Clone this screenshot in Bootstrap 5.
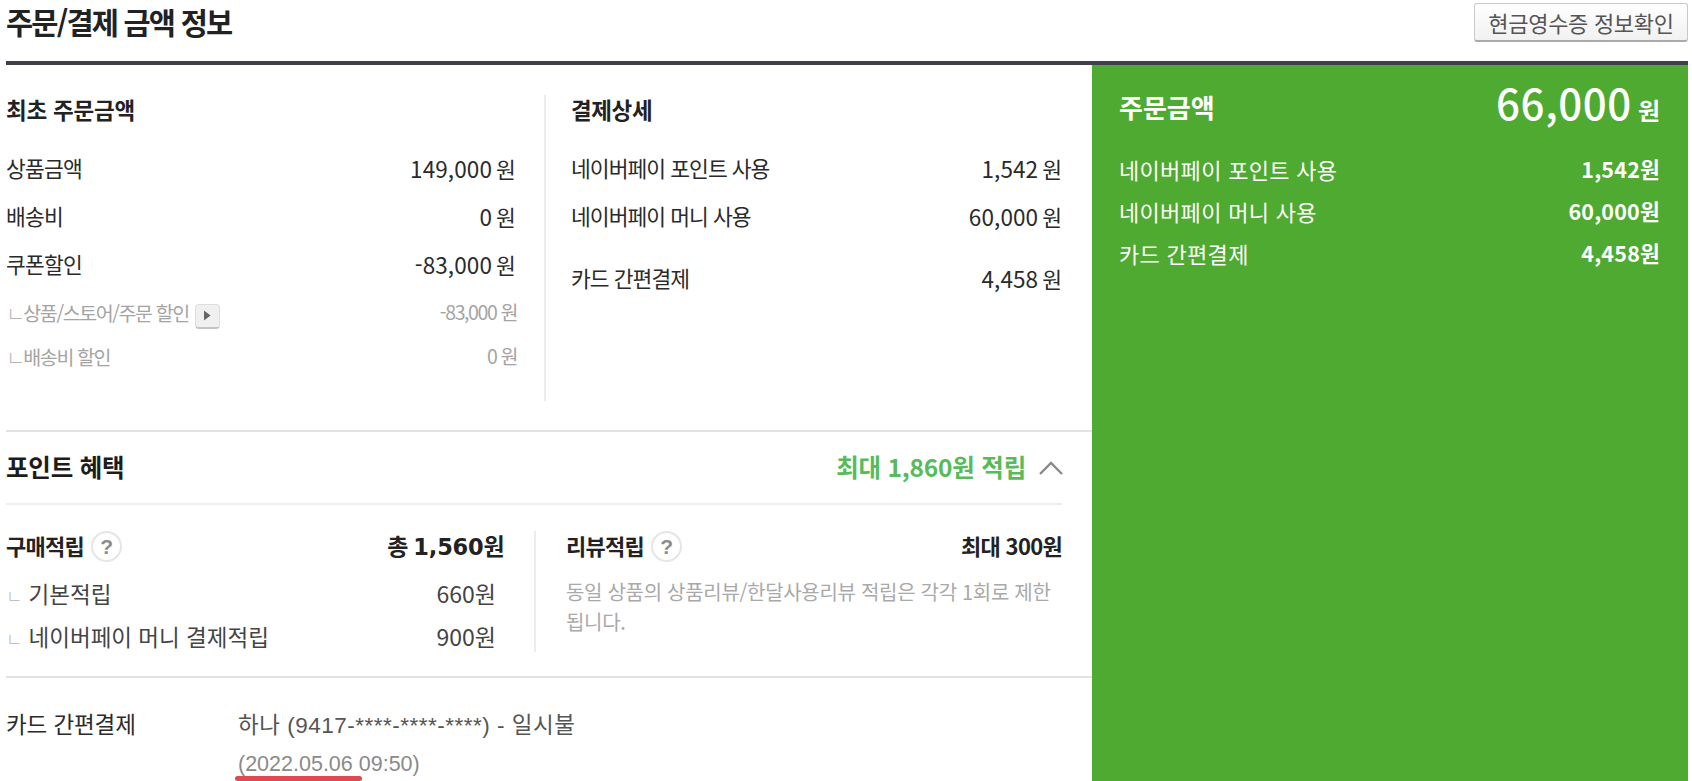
<!DOCTYPE html>
<html lang="ko">
<head>
<meta charset="utf-8">
<title>주문/결제 금액 정보</title>
<link href="https://cdn.jsdelivr.net/npm/bootstrap@5.3.0/dist/css/bootstrap.min.css" rel="stylesheet">
<style>
html,body{height:781px;overflow:hidden;background:#fff}
body{font-family:"Noto Sans CJK KR","Noto Sans",sans-serif;color:#26282b}
.sheet{margin:0 4px 0 6px}
.head-bar{height:65px;border-bottom:4px solid #3e414b;padding-bottom:18px}
.head-title{font-size:29.5px;font-weight:700;letter-spacing:-1.8px;line-height:42px;margin:0;color:#222}
.receipt-btn{position:relative;top:3px;width:214px;height:39px;padding:0;font-size:22px;line-height:36px;color:#555;background:linear-gradient(#fff,#f1f1f1);border:1px solid #c9c9c9;border-bottom:2px solid #aaa;border-radius:3px;white-space:nowrap;letter-spacing:-.3px}
.left-area{width:1086px}
.green-area{width:596px;height:716px;background:#4eaa30;color:#fff;padding:19px 28px 0 27px}
.top-sec{height:367px;border-bottom:2px solid #e2e2de}
.first-col{width:509px;padding-top:21px}
.rule-v{width:2px;background:#ececec}
.detail-col{width:515px;padding:21px 0 0 25px}
.sub-head{font-size:22.500px;font-weight:700;line-height:46px;height:46px;letter-spacing:-.2px;color:#222;margin:0}
.detail-col .sub-head{letter-spacing:-.4px}
.rule-v.tall{height:306px;margin:30px 0 0 29px}
.money-row{font-size:21.5px;line-height:48px;height:48px;letter-spacing:-.8px;color:#2a2a2a}
.detail-col .money-row{letter-spacing:-.95px}
.money-row .num{font-size:22.5px;letter-spacing:.1px}
.money-row .won{margin-left:4px}
.gap-row{margin-top:14px}
.first-rows{margin-top:12px}
.dim-row{font-size:19.5px;line-height:44px;height:44px;letter-spacing:-1.4px;color:#a4a4a4;margin-right:-2px}
.dim-start{margin-top:2px}
.corner{font-size:21px;font-weight:300;color:#b5b5b5;margin-right:-2px;letter-spacing:0}
.tri-btn{display:inline-flex;width:25px;height:25px;align-items:center;justify-content:center;background:#f0f0f0;border:1px solid #ddd;border-bottom:2px solid #c4c4c4;border-radius:4px;vertical-align:0;margin-left:6px}
.tri-btn svg{display:block}
.point-top{height:73px;width:1056px;border-bottom:2px solid #eeeeee}
.point-title{font-size:24.5px;font-weight:700;color:#1c1c1c;letter-spacing:-.2px}
.point-sum{font-size:24.5px;font-weight:700;color:#57bb5a;letter-spacing:-.2px}
.chev{margin-left:12px;margin-right:-2px}
.point-body{height:173px;width:1056px}
.save-col{width:528px;padding-right:30px}
.rule-v.short{height:121px;margin-top:26px}
.review-col{flex:1;padding-left:30px}
.save-head{height:58px;padding-top:17px;line-height:46px;font-size:22px;font-weight:700;color:#222;letter-spacing:-.7px}
.save-head .tot{font-size:23px}
.save-head .tot b{font-family:"DejaVu Sans",sans-serif;font-size:22.5px;letter-spacing:-.2px}
.q-mark{display:inline-flex;width:31px;height:31px;border-radius:50%;align-items:center;justify-content:center;background:#fff;border:2px solid #e6e6e6;font-family:"Liberation Sans",sans-serif;font-size:21px;font-weight:700;color:#8b8b8b;margin-left:7px;vertical-align:1px;line-height:1;letter-spacing:0}
.save-row{font-size:22.5px;line-height:46px;height:43px;color:#444;padding-right:8px}
.save-first{margin-top:7px}
.save-row .corner{margin-right:6px;font-size:18px}
.save-row .num{font-size:23px}
.review-note{font-size:20px;line-height:30px;color:#a9a9a9;letter-spacing:-.3px;margin:14px 0 0}
.foot-sec{border-top:2px solid #e2e2de;margin-top:-2px;padding-top:22px}
.foot-label{width:232px;font-size:22.5px;line-height:46px;color:#2a2a2a;letter-spacing:-.1px}
.foot-card{font-size:22.5px;line-height:46px;color:#555;letter-spacing:.5px}
.foot-date{font-size:21.5px;line-height:30px;color:#8a8a8a;position:relative;display:inline-block;font-family:"Liberation Sans",sans-serif}
.foot-card .lat{font-family:"Liberation Sans",sans-serif}
.red-mark{position:absolute;left:-3px;top:27px;width:127px;height:5px;background:#dd4a52;border-radius:3px}
.green-head{height:46px;line-height:46px;margin-bottom:18px}
.green-head .g-label{font-size:26px;font-weight:700}
.green-head .g-big{font-size:42px;font-weight:500;line-height:46px;letter-spacing:.6px}
.green-head .g-won{font-size:24px;font-weight:700;margin-left:6px}
.green-row{font-size:22px;line-height:42px;height:42px;letter-spacing:.3px}
.green-row strong{font-weight:700;font-size:21.5px;letter-spacing:.2px}
</style>
</head>
<body>
<div class="sheet">
  <header class="head-bar d-flex justify-content-between align-items-start">
    <h1 class="head-title">주문/결제 금액 정보</h1>
    <button type="button" class="btn receipt-btn">현금영수증 정보확인</button>
  </header>
  <div class="d-flex">
    <main class="left-area">
      <section class="top-sec d-flex">
        <div class="first-col">
          <h2 class="sub-head">최초 주문금액</h2>
          <div class="first-rows">
            <div class="money-row d-flex justify-content-between"><span>상품금액</span><span><span class="num">149,000</span><span class="won">원</span></span></div>
            <div class="money-row d-flex justify-content-between"><span>배송비</span><span><span class="num">0</span><span class="won">원</span></span></div>
            <div class="money-row d-flex justify-content-between"><span>쿠폰할인</span><span><span class="num">-83,000</span><span class="won">원</span></span></div>
            <div class="dim-row dim-start d-flex justify-content-between"><span><span class="corner">ㄴ</span>상품/스토어/주문 할인<span class="tri-btn"><svg width="8" height="11" viewBox="0 0 8 11"><path d="M1 0.5 7.5 5.5 1 10.500Z" fill="#666"/></svg></span></span><span>-83,000<span class="won"> 원</span></span></div>
            <div class="dim-row d-flex justify-content-between"><span><span class="corner">ㄴ</span>배송비 할인</span><span>0<span class="won"> 원</span></span></div>
          </div>
        </div>
        <div class="rule-v tall"></div>
        <div class="detail-col">
          <h2 class="sub-head">결제상세</h2>
          <div class="first-rows">
            <div class="money-row d-flex justify-content-between"><span>네이버페이 포인트 사용</span><span><span class="num">1,542</span><span class="won">원</span></span></div>
            <div class="money-row d-flex justify-content-between"><span>네이버페이 머니 사용</span><span><span class="num">60,000</span><span class="won">원</span></span></div>
            <div class="money-row gap-row d-flex justify-content-between"><span>카드 간편결제</span><span><span class="num">4,458</span><span class="won">원</span></span></div>
          </div>
        </div>
      </section>
      <section class="point-top d-flex justify-content-between align-items-center">
        <span class="point-title">포인트 혜택</span>
        <span class="d-flex align-items-center"><span class="point-sum">최대 1,860원 적립</span>
          <svg class="chev" width="26" height="16" viewBox="0 0 26 16"><path d="M2 14 13 3 24 14" fill="none" stroke="#8a8a8a" stroke-width="2.400"/></svg>
        </span>
      </section>
      <section class="point-body d-flex">
        <div class="save-col">
          <div class="save-head d-flex justify-content-between"><span>구매적립<span class="q-mark">?</span></span><span class="tot">총 <b>1,560</b>원</span></div>
          <div class="save-row save-first d-flex justify-content-between"><span><span class="corner">ㄴ</span>기본적립</span><span class="num">660원</span></div>
          <div class="save-row d-flex justify-content-between"><span><span class="corner">ㄴ</span>네이버페이 머니 결제적립</span><span class="num">900원</span></div>
        </div>
        <div class="rule-v short"></div>
        <div class="review-col">
          <div class="save-head d-flex justify-content-between"><span>리뷰적립<span class="q-mark">?</span></span><span>최대 300원</span></div>
          <p class="review-note">동일 상품의 상품리뷰/한달사용리뷰 적립은 각각 1회로 제한<br>됩니다.</p>
        </div>
      </section>
      <section class="foot-sec d-flex">
        <div class="foot-label">카드 간편결제</div>
        <div>
          <div class="foot-card">하나 <span class="lat">(9417-****-****-****) -</span> 일시불</div>
          <div class="foot-date">(2022.05.06 09:50)<span class="red-mark"></span></div>
        </div>
      </section>
    </main>
    <aside class="green-area">
      <div class="green-head d-flex justify-content-between align-items-center"><span class="g-label">주문금액</span><span><span class="g-big">66,000</span><span class="g-won">원</span></span></div>
      <div class="green-row d-flex justify-content-between"><span>네이버페이 포인트 사용</span><strong>1,542원</strong></div>
      <div class="green-row d-flex justify-content-between"><span>네이버페이 머니 사용</span><strong>60,000원</strong></div>
      <div class="green-row d-flex justify-content-between"><span>카드 간편결제</span><strong>4,458원</strong></div>
    </aside>
  </div>
</div>
</body>
</html>
